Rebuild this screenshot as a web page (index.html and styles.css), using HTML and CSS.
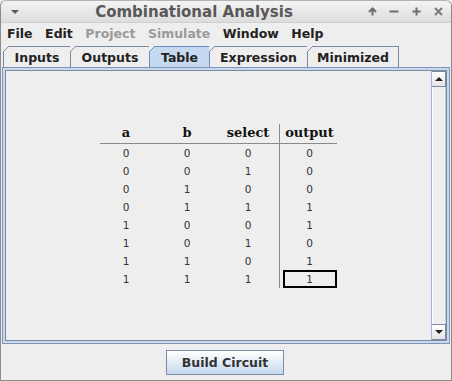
FILE: index.html
```html
<!doctype html>
<html lang="en">
<head>
  <meta charset="UTF-8">
  <title>Combinational Analysis</title>
  <link rel="stylesheet" href="styles.css">
</head>
<body>
  <div class="window">
    <div class="titlebar">
      <div class="title-left"><span class="menu-arrow"></span></div>
      <div class="title">Combinational Analysis</div>
      <div class="title-buttons">
        <span class="tbtn">
          <svg width="9" height="9" viewBox="0 0 9 9"><path d="M4.5 8.5V2 M1 5L4.5 1.5 8 5" fill="none" stroke="#6e6e6e" stroke-width="2"/></svg>
        </span>
        <span class="tbtn">
          <svg width="10" height="9" viewBox="0 0 10 9"><path d="M0.5 4.5H9.5" stroke="#6e6e6e" stroke-width="2"/></svg>
        </span>
        <span class="tbtn">
          <svg width="9" height="9" viewBox="0 0 9 9"><path d="M0.5 4.5H8.5 M4.5 0.5V8.5" stroke="#6e6e6e" stroke-width="2"/></svg>
        </span>
        <span class="tbtn">
          <svg width="9" height="9" viewBox="0 0 9 9"><path d="M1 1L8 8 M8 1L1 8" stroke="#7a7a7a" stroke-width="2"/></svg>
        </span>
      </div>
    </div>

    <div class="menubar">
      <span class="menu">File</span>
      <span class="menu">Edit</span>
      <span class="menu disabled">Project</span>
      <span class="menu disabled">Simulate</span>
      <span class="menu">Window</span>
      <span class="menu">Help</span>
    </div>

    <div class="tabs">
      <div class="tab tab-inputs">Inputs</div>
      <div class="tab tab-outputs">Outputs</div>
      <div class="tab tab-table active">Table</div>
      <div class="tab tab-expr">Expression</div>
      <div class="tab tab-min last">Minimized</div>
    </div>

    <div class="panel">
      <div class="scrollpane">
        <div class="viewport">
          <div class="truth-table">
            <div class="thead">
              <div class="th">a</div>
              <div class="th">b</div>
              <div class="th">select</div>
              <div class="th out">output</div>
            </div>
            <div class="row"><div class="td">0</div><div class="td">0</div><div class="td">0</div><div class="td out">0</div></div>
            <div class="row"><div class="td">0</div><div class="td">0</div><div class="td">1</div><div class="td out">0</div></div>
            <div class="row"><div class="td">0</div><div class="td">1</div><div class="td">0</div><div class="td out">0</div></div>
            <div class="row"><div class="td">0</div><div class="td">1</div><div class="td">1</div><div class="td out">1</div></div>
            <div class="row"><div class="td">1</div><div class="td">0</div><div class="td">0</div><div class="td out">1</div></div>
            <div class="row"><div class="td">1</div><div class="td">0</div><div class="td">1</div><div class="td out">0</div></div>
            <div class="row"><div class="td">1</div><div class="td">1</div><div class="td">0</div><div class="td out">1</div></div>
            <div class="row"><div class="td">1</div><div class="td">1</div><div class="td">1</div><div class="td out"><span class="cursor">1</span></div></div>
          </div>
        </div>
        <div class="scrollbar">
          <div class="sb-btn"><span class="arrow-up"></span></div>
          <div class="sb-track"></div>
          <div class="sb-btn"><span class="arrow-down"></span></div>
        </div>
      </div>
    </div>

    <div class="footer">
      <button class="build">Build Circuit</button>
    </div>
  </div>
</body>
</html>
```

FILE: styles.css
```css
* {
  margin: 0;
  padding: 0;
  box-sizing: border-box;
}
body {
  background-color: #eeeeee;
  font-family: "DejaVu Sans", sans-serif;
}
.window {
  width: 452px;
  height: 381px;
  display: flex;
  flex-direction: column;
  background-color: #eeeeee;
  border: 1px solid #8c8c8c;
  border-top: none;
  border-radius: 6px 6px 0 0;
  overflow: hidden;
}

/* title bar */
.titlebar {
  height: 22px;
  display: flex;
  align-items: center;
  background: linear-gradient(#f4f4f4, #dcdcdc);
  border-top: 1px solid #b4b4b4;
  border-radius: 6px 6px 0 0;
}
.title-left {
  width: 26px;
  padding-left: 10px;
  display: flex;
  align-items: center;
}
.menu-arrow {
  width: 0;
  height: 0;
  border-left: 4px solid transparent;
  border-right: 4px solid transparent;
  border-top: 4px solid #5a5a5a;
}
.title {
  flex: 1;
  text-align: center;
  font-size: 15px;
  font-weight: bold;
  color: #585858;
}
.title-buttons {
  display: flex;
  padding-right: 2px;
}
.tbtn {
  width: 22px;
  height: 20px;
  display: flex;
  align-items: center;
  justify-content: center;
}

/* menu */
.menubar {
  height: 22px;
  display: flex;
  align-items: center;
  border-top: 1px solid #d0d0d0;
}
.menu {
  padding: 0 6.5px 0 6px;
  font-size: 12.5px;
  font-weight: bold;
  color: #222222;
}
.menu.disabled {
  color: #9a9a9a;
}

/* tabs */
.tabs {
  height: 21px;
  margin-top: 2px;
  padding-left: 2px;
  display: flex;
  align-items: flex-end;
}
.tab {
  position: relative;
  height: 21px;
  display: flex;
  align-items: center;
  justify-content: center;
  font-size: 12.5px;
  font-weight: bold;
  color: #222222;
  border-top: 1px solid #7a8aa0;
  border-left: 1px solid #7a8aa0;
}
.tab-inputs { width: 67px; }
.tab-outputs { width: 79px; }
.tab-table { width: 60px; }
.tab-expr { width: 98px; }
.tab-min { width: 92px; }
.tab.last {
  border-right: 1px solid #7a8aa0;
}
.tab::before {
  content: "";
  position: absolute;
  top: -1px;
  left: -1px;
  width: 6px;
  height: 6px;
  background: linear-gradient(135deg, #eeeeee 0 42%, #7a8aa0 42% 58%, transparent 58%);
}
.tab.active {
  background-color: #c5daf1;
  border-color: #6a8cc4;
}
.tab.active + .tab {
  border-left-color: #6a8cc4;
}

/* panel */
.panel {
  flex: 1;
  margin: 0 1px;
  padding: 2px;
  background-color: #c8d9ee;
  border: 1px solid #7e94b8;
  display: flex;
}
.scrollpane {
  flex: 1;
  display: flex;
  border: 1px solid #7a8aa0;
  background-color: #eeeeee;
}
.viewport {
  flex: 1;
  display: flex;
  justify-content: center;
  align-items: flex-start;
  padding-top: 53px;
}

/* truth table */
.truth-table {
  margin-left: -2px;
}
.thead,
.row {
  display: grid;
  grid-template-columns: 61px 61px 61px 61px;
}
.thead {
  height: 20px;
  background: linear-gradient(#8a8a8a, #8a8a8a) no-repeat;
  background-size: 237px 1px;
  background-position: 4px 100%;
}
.th {
  font-family: "DejaVu Serif", serif;
  font-size: 13px;
  font-weight: bold;
  color: #111111;
  text-align: center;
  line-height: 18px;
}
.row {
  height: 18px;
}
.td {
  font-size: 10.5px;
  color: #333333;
  text-align: center;
  line-height: 18px;
}
.out {
  border-left: 1px solid #8a8a8a;
}
.cursor {
  display: block;
  height: 18px;
  margin: 0 3px 0 3px;
  border: 2px solid #000000;
  line-height: 14px;
}

/* scrollbar */
.scrollbar {
  width: 15px;
  display: flex;
  flex-direction: column;
  border-left: 1px solid #9fb4d2;
  background-color: #eeeeee;
}
.sb-btn {
  height: 16px;
  display: flex;
  align-items: center;
  justify-content: center;
  background: linear-gradient(#ffffff, #e4e4e4);
  border: 1px solid #7a8aa0;
  border-left: none;
}
.sb-track {
  flex: 1;
  border-left: 1px solid #ffffff;
  border-right: 1px solid #b8cce4;
}
.arrow-up,
.arrow-down {
  width: 0;
  height: 0;
  border-left: 4px solid transparent;
  border-right: 4px solid transparent;
}
.arrow-up {
  border-bottom: 4px solid #222222;
}
.arrow-down {
  border-top: 4px solid #222222;
}

/* footer */
.footer {
  height: 36px;
  display: flex;
  justify-content: center;
  padding-top: 6px;
}
.build {
  width: 118px;
  height: 25px;
  font-family: "DejaVu Sans", sans-serif;
  font-size: 12.5px;
  font-weight: bold;
  color: #333333;
  border: 1px solid #7a8aa0;
  background: linear-gradient(#ffffff, #c5d8ee);
  margin-right: 2px;
}
```
